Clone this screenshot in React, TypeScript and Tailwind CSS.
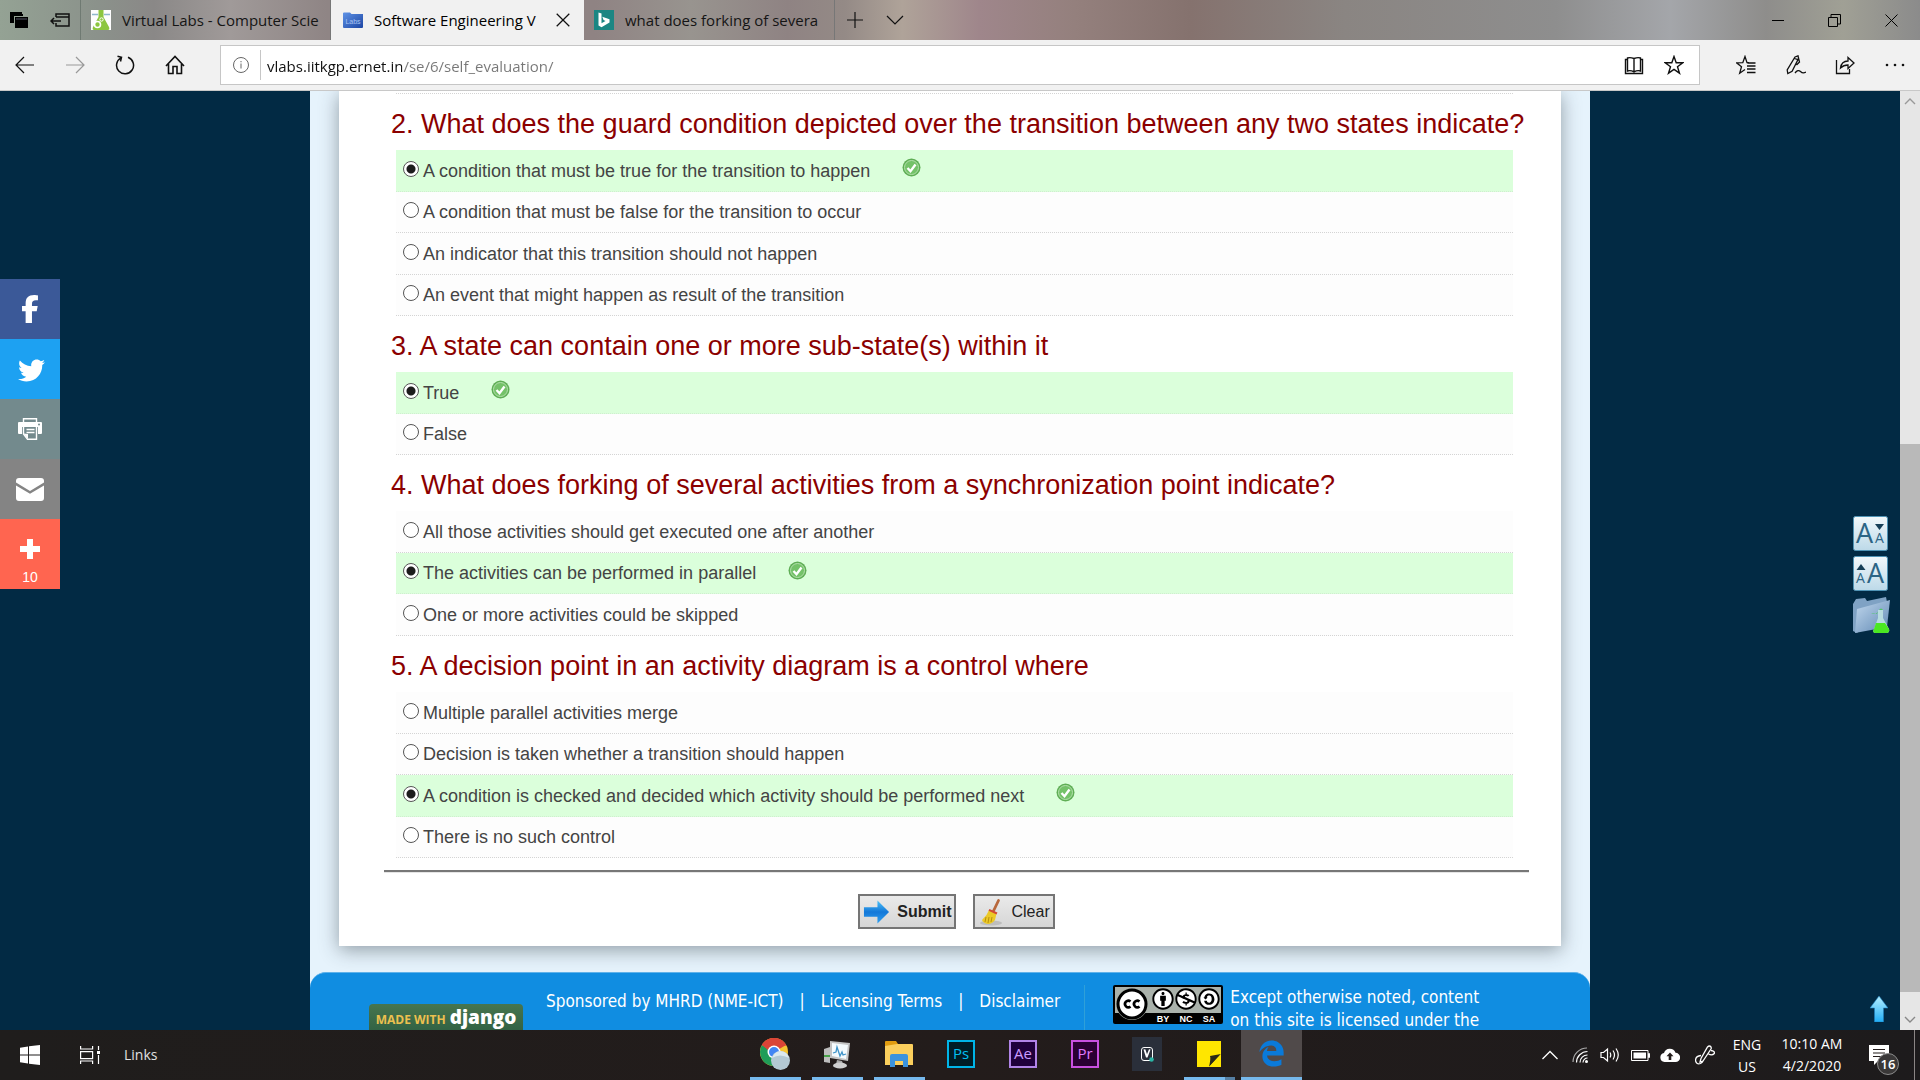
import React from "react";
import {
  FaFacebookF,
  FaTwitter,
  FaEdgeLegacy,
  FaCreativeCommonsBy,
  FaCreativeCommonsNc,
  FaCreativeCommonsSa,
} from "react-icons/fa6";

type Question = { title: string; options: string[]; answer: number };

const questions: Question[] = [
  {
    title: "2. What does the guard condition depicted over the transition between any two states indicate?",
    options: [
      "A condition that must be true for the transition to happen",
      "A condition that must be false for the transition to occur",
      "An indicator that this transition should not happen",
      "An event that might happen as result of the transition",
    ],
    answer: 0,
  },
  {
    title: "3. A state can contain one or more sub-state(s) within it",
    options: ["True", "False"],
    answer: 0,
  },
  {
    title: "4. What does forking of several activities from a synchronization point indicate?",
    options: [
      "All those activities should get executed one after another",
      "The activities can be performed in parallel",
      "One or more activities could be skipped",
    ],
    answer: 1,
  },
  {
    title: "5. A decision point in an activity diagram is a control where",
    options: [
      "Multiple parallel activities merge",
      "Decision is taken whether a transition should happen",
      "A condition is checked and decided which activity should be performed next",
      "There is no such control",
    ],
    answer: 2,
  },
];

/* ---------- browser chrome ---------- */

function FlaskFavicon() {
  return (
    <svg width="20" height="20" viewBox="0 0 20 20" aria-hidden="true">
      <rect width="20" height="20" fill="#fdfdfd" />
      <path d="M1 4.500h6M13 4.500h6" stroke="#8fb8cc" strokeWidth="1.400" />
      <path d="M7.500 0h5v7l5.500 10q1 3-1 3H3q-2 0-1-3l5.500-10z" fill="#8cc63f" />
      <circle cx="6.500" cy="14.500" r="3" fill="none" stroke="#fff" strokeWidth="1.600" />
      <circle cx="10.500" cy="9.500" r="1.700" fill="none" stroke="#fff" strokeWidth="1" />
    </svg>
  );
}

function FolderFavicon() {
  return (
    <svg width="20" height="20" viewBox="0 0 20 20" aria-hidden="true">
      <defs>
        <linearGradient id="fold" x1="0" y1="0" x2="1" y2="1">
          <stop offset="0" stopColor="#5f93e6" />
          <stop offset="1" stopColor="#1c46a4" />
        </linearGradient>
      </defs>
      <path d="M0 3.500q0-1 1-1h6l1.500 1.500H20v13q0 1-1 1H1q-1 0-1-1z" fill="url(#fold)" />
      <text x="10" y="14" textAnchor="middle" fontSize="7" fill="#a9c4f2" fontFamily="Liberation Sans, sans-serif">
        Labs
      </text>
    </svg>
  );
}

function BingFavicon() {
  return (
    <svg width="20" height="20" viewBox="0 0 20 20" aria-hidden="true">
      <rect width="20" height="20" fill="#1b8683" />
      <path d="M4.500 2.500l3 1.100v9.600l4-2.300-2-1-1.200-3.100 7.200 2.500v3.300l-8 4.700-3-1.700z" fill="#fff" />
    </svg>
  );
}

function Stroke({ children, size = 20, color = "#111", width = 1.2 }: { children: React.ReactNode; size?: number; color?: string; width?: number }) {
  return (
    <svg width={size} height={size} viewBox="0 0 20 20" fill="none" stroke={color} strokeWidth={width} aria-hidden="true">
      {children}
    </svg>
  );
}

function TabBar() {
  return (
    <header className="flex h-10 shrink-0 items-stretch bg-[linear-gradient(90deg,#94a294_0%,#8b928b_5%,#8a8887_8%,#a09a99_12%,#8f8585_17%,#8f8383_31%,#98948f_36%,#8f8383_41%,#948a86_44%,#afa399_47%,#9f868b_51%,#94807d_56%,#85726e_62%,#8a8582_70%,#8e8e8e_81%,#a4a6aa_87%,#8e8d8b_92%,#a0a095_96%,#8b8b8b_100%)]">
      <div className="flex w-[81px] items-center border-r border-[#6f7a72] text-black">
        <button aria-label="Tabs you've set aside" className="ml-2.5">
          <svg width="20" height="20" viewBox="0 0 20 20" aria-hidden="true">
            <path d="M0 2h12v2h1v2H4v7H0z" fill="#000" />
            <path d="M5 7h13v11H5z" fill="#000" />
            <path d="M6 9h11" stroke="#556" strokeWidth="1" />
          </svg>
        </button>
        <button aria-label="Set these tabs aside" className="ml-5">
          <Stroke>
            <path d="M6 7V4h13v12H6v-3M6 7h13M1 11h10M4 8l-3 3 3 3" strokeWidth="1.500" />
          </Stroke>
        </button>
      </div>
      <button className="flex w-[250px] items-center gap-[11px] border-r border-[#777] pl-2.5 text-[15px] text-[#151515]">
        <FlaskFavicon />
        <span className="text-left whitespace-nowrap">Virtual Labs - Computer Scie</span>
      </button>
      <div className="flex w-[253px] items-center bg-[#f1f1f1] pl-3 text-[15px] text-black">
        <FolderFavicon />
        <span className="ml-[11px] grow whitespace-nowrap">Software Engineering V</span>
        <button aria-label="Close tab" className="mr-3">
          <Stroke size={18}>
            <path d="M3 3l14 14M17 3L3 17" strokeWidth="1.400" />
          </Stroke>
        </button>
      </div>
      <button className="flex w-[251px] items-center gap-[11px] border-r border-[#777] pl-2.5 text-[15px] text-[#151515]">
        <BingFavicon />
        <span className="text-left whitespace-nowrap">what does forking of severa</span>
      </button>
      <button aria-label="New tab" className="flex w-10 items-center justify-center">
        <Stroke>
          <path d="M2 10h16M10 2v16" />
        </Stroke>
      </button>
      <button aria-label="Show tab previews" className="flex w-10 items-center justify-center">
        <Stroke>
          <path d="M2 6l8 8 8-8" />
        </Stroke>
      </button>
      <div className="ml-auto flex">
        <button aria-label="Minimize" className="flex w-[57px] items-center justify-center">
          <span className="h-px w-3 bg-black" />
        </button>
        <button aria-label="Restore" className="flex w-[57px] items-center justify-center">
          <svg width="13" height="13" viewBox="0 0 13 13" fill="none" stroke="#000" aria-hidden="true">
            <path d="M.5 3.500h9v9h-9zM3 3V.5h9.500V10H10" />
          </svg>
        </button>
        <button aria-label="Close" className="flex w-[57px] items-center justify-center">
          <svg width="13" height="13" viewBox="0 0 13 13" fill="none" stroke="#000" aria-hidden="true">
            <path d="M.5.5l12 12M12.500.5l-12 12" />
          </svg>
        </button>
      </div>
    </header>
  );
}

function Toolbar() {
  return (
    <nav className="flex h-[51px] shrink-0 items-center border-b border-[#c8c8c8] bg-[#f1f1f1]">
      <button aria-label="Back" className="flex w-[49px] justify-center">
        <Stroke>
          <path d="M1 10h18M9 2l-8 8 8 8" />
        </Stroke>
      </button>
      <button aria-label="Forward" className="flex w-[51px] justify-center">
        <Stroke color="#999">
          <path d="M1 10h18M11 2l8 8-8 8" />
        </Stroke>
      </button>
      <button aria-label="Refresh" className="flex w-[50px] justify-center">
        <svg width="20" height="20" viewBox="0 0 20 20" fill="none" stroke="#111" strokeWidth="1.500" aria-hidden="true">
          <path d="M13 2.300A8.500 8.500 0 1 1 6 2.800M2.500 1.300l4 1-1 4.200" />
        </svg>
      </button>
      <button aria-label="Home" className="flex w-[50px] justify-center">
        <Stroke>
          <path d="M1 11l9-9.500 9 9.500M3.500 9v9.500h4.500v-7h4v7h4.500V9" strokeWidth="1.600" />
        </Stroke>
      </button>
      <div className="ml-5 flex h-10 grow items-center border border-[#c6c6c6] bg-white">
        <button aria-label="Site information" className="flex w-[39px] items-center justify-center">
          <svg width="16" height="16" viewBox="0 0 16 16" fill="none" stroke="#666" aria-hidden="true">
            <circle cx="8" cy="8" r="7.500" />
            <path d="M8 6.500v5M8 4v1.300" />
          </svg>
        </button>
        <span className="h-[30px] w-px bg-[#c6c6c6]" />
        <input
          aria-label="Address"
          defaultValue="vlabs.iitkgp.ernet.in/se/6/self_evaluation/"
          className="ml-1.5 min-w-0 grow bg-[linear-gradient(90deg,#111_135px,#777_135px)] bg-clip-text pt-0.5 text-[15px] text-transparent outline-none"
        />
        <button aria-label="Reading view" className="flex w-[41px] justify-center">
          <Stroke>
            <path d="M10 3.500v14M10 3.500Q6 2 3.500 3v13q3-1 6.500.8M10 3.500q4-1.500 6.500-.5v13q-3-1-6.500.8M3.500 4.500h-2v14h17v-14h-2" strokeWidth="1.400" />
          </Stroke>
        </button>
        <button aria-label="Add to favorites" className="mr-[5px] flex w-10 justify-center">
          <Stroke>
            <path d="M10 1.500l2.200 6.200 6.600.1-5.300 4 2 6.400L10 14.400l-5.500 3.800 2-6.400-5.300-4 6.600-.1z" strokeWidth="1.400" />
          </Stroke>
        </button>
      </div>
      <div className="flex pl-5">
        <button aria-label="Favorites hub" className="flex w-[51px] justify-center">
          <Stroke>
            <path d="M13 7.700l-2-.1L9 1.500 6.800 7.600l-6.300.2 5 4-1.800 6.400L9 14.500M11 11h8.500M11 14h8.500M11 17.500h8.500M11.500 8h8" strokeWidth="1.300" />
          </Stroke>
        </button>
        <button aria-label="Add notes" className="flex w-[49px] justify-center">
          <Stroke>
            <path d="M9 2l3-1.200.6 2.500-6.500 13-4.300 2.200-.6-3.500L9 2zM8.500 3.500l3.500 1.200M12.500 3l1 4-3 3M9 18q3-4 5.500-1.500T20 17" strokeWidth="1.300" />
          </Stroke>
        </button>
        <button aria-label="Share" className="flex w-[49px] justify-center">
          <Stroke>
            <path d="M1.500 5v13.500h13V14M5.500 13q1-7 7.500-7V2.500L19 8l-6 5.500V10q-4.500 0-7.500 3z" strokeWidth="1.300" />
          </Stroke>
        </button>
        <button aria-label="Settings and more" className="flex w-[51px] justify-center">
          <svg width="20" height="20" viewBox="0 0 20 20" fill="#111" aria-hidden="true">
            <circle cx="2" cy="10" r="1.300" />
            <circle cx="10" cy="10" r="1.300" />
            <circle cx="18" cy="10" r="1.300" />
          </svg>
        </button>
      </div>
    </nav>
  );
}

/* ---------- page content ---------- */

function CorrectBadge() {
  return (
    <svg width="19" height="19" viewBox="0 0 19 19" role="img" aria-label="Correct">
      <circle cx="9.500" cy="9.500" r="9" fill="#5fae55" />
      <circle cx="9.500" cy="9.500" r="7" fill="#74c269" stroke="#b4e0ad" strokeWidth="1" />
      <path d="M5.500 10l3 3.200 5-6.700" fill="none" stroke="#fff" strokeWidth="2.400" />
    </svg>
  );
}

function QuestionBlock({ question, number }: { question: Question; number: number }) {
  return (
    <fieldset className="min-w-0">
      <legend className="flex h-14 w-full items-center pt-1 text-[27px] leading-8 whitespace-nowrap text-[#8b0000]">
        {question.title}
      </legend>
      <ul className="ml-[5px]">
        {question.options.map((option, i) => {
          const chosen = i === question.answer;
          return (
            <li
              key={option}
              className={
                chosen
                  ? "flex h-[41px] items-center border-b border-dotted border-[#cfeecf] bg-[#dbffdb] odd:h-[42px]"
                  : "flex h-[41px] items-center border-b border-dotted border-[#d4d4d4] bg-[#fdfdfd] odd:h-[42px]"
              }
            >
              <label className="flex items-center gap-1 pl-[7px] text-[18px] leading-6 text-[#444]">
                <input
                  type="radio"
                  name={`question-${number}`}
                  defaultChecked={chosen}
                  className="mb-1 size-4 appearance-none rounded-full border border-[#555] bg-white checked:bg-[radial-gradient(circle,#1c1c1c_4px,#fff_5px)]"
                />
                <span>{option}</span>
              </label>
              {chosen && (
                <span className="mb-1.5 ml-8">
                  <CorrectBadge />
                </span>
              )}
            </li>
          );
        })}
      </ul>
    </fieldset>
  );
}

function ArrowIcon() {
  return (
    <svg width="27" height="26" viewBox="0 0 28 26" aria-hidden="true">
      <defs>
        <linearGradient id="arrow" x1="0" y1="0" x2="0" y2="1">
          <stop offset="0" stopColor="#4cc3fa" />
          <stop offset=".5" stopColor="#1478d8" />
          <stop offset="1" stopColor="#2fa0f2" />
        </linearGradient>
      </defs>
      <path d="M1 8h14V1l12 12-12 12v-7H1z" fill="url(#arrow)" />
    </svg>
  );
}

function BroomIcon() {
  return (
    <svg width="26" height="28" viewBox="0 0 26 28" aria-hidden="true">
      <ellipse cx="13" cy="25" rx="11" ry="2.500" fill="#bdbdbd" />
      <path d="M20.500 2.500L15 14" stroke="#b8683c" strokeWidth="2.800" strokeLinecap="round" />
      <path d="M11 12l7.500 3.500-1.500 6.500q-3 4-7 4-5-1-6-4l4.500-5z" fill="#ecc927" />
      <path d="M8 19l-1 5M11 19l-1 6M14 19l-1 5" stroke="#b8900e" strokeWidth="1" />
      <path d="M11 11.800l8 3.700" stroke="#d24a35" strokeWidth="2" />
    </svg>
  );
}

function CreativeCommonsBadge() {
  return (
    <svg width="110" height="39" viewBox="0 0 110 39" role="img" aria-label="Creative Commons BY NC SA">
      <rect width="110" height="39" rx="2" fill="#000" />
      <rect x="2" y="2" width="106" height="26" fill="#aab2ab" />
      <circle cx="19" cy="19" r="16" fill="#aab2ab" />
      <circle cx="19" cy="19" r="14" fill="#fff" stroke="#000" strokeWidth="3" />
      <path d="M17.500 16.500a3.300 3.300 0 1 0 0 5M26.500 16.500a3.300 3.300 0 1 0 0 5" fill="none" stroke="#000" strokeWidth="2.600" />
      <circle cx="50" cy="14" r="10" fill="#fff" />
      <circle cx="73" cy="14" r="10" fill="#fff" />
      <circle cx="96" cy="14" r="10" fill="#fff" />
      <g className="text-black">
        <FaCreativeCommonsBy x={39} y={3} size={22} />
        <FaCreativeCommonsNc x={62} y={3} size={22} />
        <FaCreativeCommonsSa x={85} y={3} size={22} />
      </g>
      <g fill="#fff" fontFamily="Liberation Sans, sans-serif" fontSize="9" fontWeight="700" textAnchor="middle">
        <text x="50" y="36.500">BY</text>
        <text x="73" y="36.500">NC</text>
        <text x="96" y="36.500">SA</text>
      </g>
    </svg>
  );
}

function SiteFooter() {
  return (
    <footer className="mt-[26px] flex grow items-start rounded-t-2xl border-t border-[#5fb2ea] bg-[#108de1] pl-[59px] font-['DejaVu_Sans_Condensed','DejaVu_Sans',sans-serif] text-[17px] leading-[23px] text-white">
      <a
        href="#django"
        className="mt-[31px] flex h-[30px] w-[154px] shrink-0 items-center justify-center gap-1 rounded-t-sm bg-linear-to-b from-[#47754e] to-[#2f6043] font-['Open_Sans',sans-serif] whitespace-nowrap"
      >
        <span className="text-[12px] font-bold text-[#ecc04f]">MADE WITH</span>
        <span className="pb-1 text-[19px] font-extrabold">django</span>
      </a>
      <nav className="mt-[17px] ml-[23px] flex gap-4 whitespace-nowrap">
        <a href="#mhrd">Sponsored by MHRD (NME-ICT)</a>
        <span>|</span>
        <a href="#terms">Licensing Terms</a>
        <span>|</span>
        <a href="#disclaimer">Disclaimer</a>
      </nav>
      <div className="mt-3 ml-6 flex gap-[7px] border-l border-[#2fa0d8] pl-7 whitespace-nowrap">
        <CreativeCommonsBadge />
        <p className="pt-px">
          Except otherwise noted, content
          <br />
          on this site is licensed under the
        </p>
      </div>
    </footer>
  );
}

function ShareBar() {
  return (
    <aside className="absolute top-[188px] left-0 flex w-[60px] flex-col text-white">
      <a href="#facebook" aria-label="Facebook" className="flex h-[60px] items-center justify-center bg-[#3b5998]">
        <FaFacebookF size={28} />
      </a>
      <a href="#twitter" aria-label="Twitter" className="flex h-[60px] items-center justify-center bg-[#1da1f2] pt-0.5 pl-0.5">
        <FaTwitter size={27} />
      </a>
      <a href="#print" aria-label="Print" className="flex h-[60px] items-center justify-center bg-[#738a8d]">
        <svg width="24" height="22" viewBox="0 0 24 22" fill="none" aria-hidden="true">
          <path d="M5.500 4V.7h13V4" stroke="#fff" strokeWidth="1.400" />
          <path d="M1 4h22q1 0 1 1v10q0 1-1 1h-3V9H4v7H1q-1 0-1-1V5q0-1 1-1z" fill="#fff" />
          <path d="M5.500 9v7l4 5.300h9V9M8.500 11.500h8M8.500 14.500h8" stroke="#fff" strokeWidth="1.400" />
          <path d="M5.500 15.500l4.500.5v5z" fill="#fff" />
          <circle cx="21" cy="6.500" r="1" fill="#738a8d" />
        </svg>
      </a>
      <a href="#mail" aria-label="Email" className="flex h-[60px] items-center justify-center bg-[#848484]">
        <svg width="28" height="23" viewBox="0 0 28 23" fill="#fff" aria-hidden="true">
          <path d="M0 3q0-3 3-3h22q3 0 3 3v1.500L14 13 0 4.500z" />
          <path d="M0 7.500l14 8.300 14-8.300V20q0 3-3 3H3q-3 0-3-3z" />
        </svg>
      </a>
      <a href="#more" aria-label="More shares" className="flex h-[70px] flex-col items-center bg-[#ff6550] pt-5 text-sm leading-5">
        <svg width="20" height="20" viewBox="0 0 20 20" fill="#fff" aria-hidden="true">
          <path d="M7 0h6v7h7v6h-7v7H7v-7H0V7h7z" />
        </svg>
        <span className="pt-2">10</span>
      </a>
    </aside>
  );
}

function FontTools() {
  return (
    <aside className="absolute top-[425px] right-3 flex w-[35px] flex-col gap-[5px]">
      <svg width="0" height="0" className="absolute" aria-hidden="true">
        <defs>
          <linearGradient id="tile" x1="0" y1="0" x2="0" y2="1">
            <stop offset="0" stopColor="#f2f8fb" />
            <stop offset="1" stopColor="#bcd9e8" />
          </linearGradient>
          <linearGradient id="folderface" x1="0" y1="0" x2="1" y2="1">
            <stop offset="0" stopColor="#c3d9ee" />
            <stop offset="1" stopColor="#5f88b4" />
          </linearGradient>
        </defs>
      </svg>
      <button aria-label="Decrease text size">
        <svg width="35" height="35" viewBox="0 0 35 35" className="block overflow-visible" aria-hidden="true">
          <rect x=".5" y=".5" width="34" height="34" rx="2" fill="url(#tile)" stroke="#4f93b5" />
          <g fill="#2c6485" fontFamily="Open Sans, sans-serif">
            <text x="3" y="27" fontSize="27">A</text>
            <text x="22" y="27" fontSize="14">A</text>
          </g>
          <path d="M22 8h9l-4.500 6z" fill="#173f57" />
        </svg>
      </button>
      <button aria-label="Increase text size">
        <svg width="35" height="35" viewBox="0 0 35 35" className="block overflow-visible" aria-hidden="true">
          <rect x=".5" y=".5" width="34" height="34" rx="2" fill="url(#tile)" stroke="#4f93b5" />
          <g fill="#2c6485" fontFamily="Open Sans, sans-serif">
            <text x="3" y="27" fontSize="14">A</text>
            <text x="14" y="27" fontSize="27">A</text>
          </g>
          <path d="M3.500 14h9L8 8z" fill="#173f57" />
        </svg>
      </button>
      <a href="#labs" aria-label="Labs folder">
        <svg width="38" height="38" viewBox="0 0 38 38" className="block" aria-hidden="true">
          <path d="M0 8l3-5 9-1 2 3 19-4 1 5L4 37l-4-2z" fill="#7fa2c4" />
          <path d="M4 13L37 4l-3 27L2 37z" fill="url(#folderface)" />
          <path d="M18 17q5 3 8-3 2-3 4 0-5 0-6 4z" fill="#4fc86a" />
          <path d="M25 14h5v8l6 11q1 3-2 4H22q-3-1-1-4l4-11z" fill="#b8dce0" />
          <path d="M23 27h9l4 6q1 3-2 4H22q-3-1-1-4z" fill="#4be822" />
        </svg>
      </a>
    </aside>
  );
}

function WebPage() {
  return (
    <main className="relative flex min-h-0 grow bg-[#022a44] font-['Liberation_Sans',sans-serif]">
      <div className="relative flex min-w-0 grow justify-center overflow-hidden">
        <div className="flex w-full max-w-7xl flex-col bg-[#e6f3fc]">
          <div className="mx-[29px] bg-white pr-8 pb-[17px] pl-[45px] shadow-[0_4px_18px_rgba(40,50,60,0.45)]">
            <form onSubmit={(e) => e.preventDefault()}>
              <div className="pr-4 pl-[7px]">
                <div className="ml-[5px] h-[3px] border-b border-dotted border-[#d4d4d4]" />
                {questions.map((q, i) => (
                  <QuestionBlock key={q.title} question={q} number={i + 2} />
                ))}
              </div>
              <hr className="mt-3 border-t-2 border-b border-t-[#777] border-b-[#e5e5e5]" />
              <div className="mt-[21px] flex justify-center gap-[17px] text-base leading-6 text-[#222]">
                <button
                  type="submit"
                  className="flex h-[35px] items-center gap-[7px] border-2 border-[#757575] bg-linear-to-b from-[#eaeaea] to-[#d6d6d6] px-[3px] font-bold"
                >
                  <ArrowIcon />
                  Submit
                </button>
                <button
                  type="reset"
                  className="flex h-[35px] items-center gap-[7px] border-2 border-[#757575] bg-linear-to-b from-[#eaeaea] to-[#d6d6d6] px-[3px]"
                >
                  <BroomIcon />
                  Clear
                </button>
              </div>
            </form>
          </div>
          <SiteFooter />
        </div>
        <ShareBar />
        <FontTools />
        <a href="#top" aria-label="Back to top" className="absolute right-3 bottom-2">
          <svg width="18" height="26" viewBox="0 0 18 26" className="block" aria-hidden="true">
            <defs>
              <linearGradient id="up" x1="0" y1="0" x2="0" y2="1">
                <stop offset="0" stopColor="#b5efff" />
                <stop offset="1" stopColor="#22aef5" />
              </linearGradient>
            </defs>
            <path d="M9 0l9 12h-4.500v14h-9V12H0z" fill="url(#up)" stroke="#1c7fc0" strokeWidth=".6" />
          </svg>
        </a>
      </div>
      <div className="flex w-5 shrink-0 flex-col items-center bg-[#e6e6e6]">
        <button aria-label="Scroll up" className="flex h-5 items-center">
          <svg width="12" height="8" viewBox="0 0 12 8" fill="none" stroke="#999" strokeWidth="1.400" aria-hidden="true">
            <path d="M1 7l5-5 5 5" />
          </svg>
        </button>
        <div className="flex w-full grow flex-col">
          <div className="basis-[37%]" />
          <div className="basis-[61%] bg-[#b9b9b9]" />
        </div>
        <button aria-label="Scroll down" className="flex h-5 items-center">
          <svg width="12" height="8" viewBox="0 0 12 8" fill="none" stroke="#888" strokeWidth="1.400" aria-hidden="true">
            <path d="M1 1l5 5 5-5" />
          </svg>
        </button>
      </div>
    </main>
  );
}

/* ---------- taskbar ---------- */

function ChromeIcon() {
  return (
    <svg width="32" height="34" viewBox="0 0 32 34" aria-hidden="true">
      <circle cx="15" cy="15" r="14" fill="#f6c433" />
      <path d="M15 15L2.900 8A14 14 0 0 1 27.100 8z" fill="#db4437" />
      <path d="M15 15L2.900 8A14 14 0 0 0 14 29l5-8z" fill="#1f9d58" />
      <path d="M15 8.500h12.500A14 14 0 0 0 2.900 8l6 5z" fill="#db4437" />
      <circle cx="15" cy="15" r="6.500" fill="#fff" />
      <circle cx="15" cy="15" r="5" fill="#4285f4" />
      <circle cx="21.500" cy="23.500" r="9.500" fill="#b4c9d4" />
      <path d="M13 21q8-5 17 0-2-7-9-7-6 1-8 7z" fill="#dbe8ee" />
    </svg>
  );
}

function MonitorIcon() {
  return (
    <svg width="28" height="30" viewBox="0 0 28 30" aria-hidden="true">
      <path d="M1 10l6-2v16l-6-1z" fill="#bdbdbd" />
      <path d="M1 17h6" stroke="#49a24a" strokeWidth="2" />
      <path d="M7 2l20 2-2 18-18-3z" fill="#c4c4c4" />
      <path d="M9 4l16 2-2 14-14-3z" fill="#f4fafd" />
      <path d="M10 14l3-1 1-5 3 9 2-4 1 3 3-1" fill="none" stroke="#3f93c8" strokeWidth="1.300" />
      <path d="M14 21l5 1 1 3h-7z" fill="#aaa" />
      <ellipse cx="17" cy="26.500" rx="7" ry="3" fill="#d0d0d0" />
    </svg>
  );
}

function ExplorerIcon() {
  return (
    <svg width="28" height="26" viewBox="0 0 28 26" aria-hidden="true">
      <path d="M0 1q0-1 1-1h10l2 3v5H0z" fill="#e29d10" />
      <path d="M0 5l12-2h15q1 0 1 1v20H0z" fill="#fbcf5d" />
      <path d="M5 26V15q0-2 2-2h14q2 0 2 2v11h-5v-6h-8v6z" fill="#3c93dd" />
    </svg>
  );
}

function StickyIcon() {
  return (
    <svg width="24" height="26" viewBox="0 0 24 26" aria-hidden="true">
      <path d="M0 0h24v26H0z" fill="#ffe600" />
      <path d="M12 26q2-9 1-11l11-2z" fill="#2a2a18" />
      <path d="M24 13v13H12z" fill="#ffe600" />
    </svg>
  );
}

function MusicIcon() {
  return (
    <svg width="30" height="34" viewBox="0 0 30 34" aria-hidden="true">
      <rect width="30" height="34" fill="#2a2f3a" />
      <rect x="9.500" y="10.500" width="11" height="13" rx="2.500" fill="none" stroke="#fff" />
      <path d="M11.500 12.500l2.500 8h1.500l3-8-1.500-.2-2 5-1.700-5z" fill="#fff" />
      <circle cx="19.500" cy="22.500" r="2.300" fill="#2bb5a5" />
    </svg>
  );
}

function TaskButton({ label, open = false, children }: { label: string; open?: boolean; children: React.ReactNode }) {
  return (
    <button aria-label={label} className="flex w-[62px] flex-col items-center">
      <span className="flex h-[47px] items-center">{children}</span>
      {open && <span className="h-[3px] w-[51px] bg-[#76b9ed]" />}
    </button>
  );
}

function Taskbar() {
  return (
    <footer className="flex h-[50px] shrink-0 items-stretch bg-linear-to-r from-[#1f1d1c] via-[#231c1b] to-[#1d1b1c] text-sm text-white">
      <div className="flex w-[744px] items-center">
        <button aria-label="Start" className="ml-5">
          <svg width="20" height="20" viewBox="0 0 20 20" fill="#fff" aria-hidden="true">
            <path d="M0 2.700L8 1.500v8H0zM9 1.300L20 0v9.500H9zM0 10.500h8v8l-8-1.200zM9 10.500h11V20L9 18.700z" />
          </svg>
        </button>
        <button aria-label="Task view" className="ml-10">
          <svg width="20" height="20" viewBox="0 0 20 20" fill="none" stroke="#fff" strokeWidth="1.200" aria-hidden="true">
            <path d="M.6 1v3h12V1M.6 6.600h12v7H.6zM.6 19v-3h12v3M18.500 1v4M18.500 10v9" />
            <path d="M17 6h3v3h-3z" fill="#fff" stroke="none" />
          </svg>
        </button>
        <span className="ml-6 text-[#e0e0e0]">Links</span>
      </div>
      <TaskButton label="Chrome" open>
        <ChromeIcon />
      </TaskButton>
      <TaskButton label="Resource monitor" open>
        <MonitorIcon />
      </TaskButton>
      <TaskButton label="File Explorer" open>
        <ExplorerIcon />
      </TaskButton>
      <TaskButton label="Photoshop">
        <span className="flex h-7 w-7 items-center justify-center border-2 border-[#00b5e8] bg-[#001d26] text-[15px] font-medium text-[#00c0f3]">Ps</span>
      </TaskButton>
      <TaskButton label="After Effects">
        <span className="flex h-7 w-7 items-center justify-center border-2 border-[#b184e8] bg-[#1f003c] text-[15px] font-medium text-[#cb9cff]">Ae</span>
      </TaskButton>
      <TaskButton label="Premiere Pro">
        <span className="flex h-7 w-7 items-center justify-center border-2 border-[#c850e0] bg-[#2a0033] text-[15px] font-medium text-[#e07aff]">Pr</span>
      </TaskButton>
      <TaskButton label="Music">
        <MusicIcon />
      </TaskButton>
      <button aria-label="Sticky Notes" className="flex w-[62px] flex-col">
        <span className="flex h-[47px] items-center self-center">
          <StickyIcon />
        </span>
        <span className="ml-1.5 h-[3px] w-[51px] border-r-10 border-[#557fa3] bg-[#76b9ed]" />
      </button>
      <button aria-label="Edge" className="ml-px flex w-[61px] flex-col items-center bg-[#504a4a]">
        <span className="flex h-[47px] items-center text-[#0a7ad9]">
          <FaEdgeLegacy size={27} />
        </span>
        <span className="h-[3px] w-full bg-[#76b9ed]" />
      </button>
      <div className="ml-auto flex items-center">
        <button aria-label="Show hidden icons" className="flex w-[30px] justify-center">
          <svg width="16" height="10" viewBox="0 0 16 10" fill="none" stroke="#fff" strokeWidth="1.300" aria-hidden="true">
            <path d="M.5 9L8 1.500 15.500 9" />
          </svg>
        </button>
        <button aria-label="Wi-Fi" className="flex w-[30px] justify-center">
          <svg width="16" height="16" viewBox="0 0 16 16" fill="none" stroke="#fff" strokeWidth="1.200" aria-hidden="true">
            <path d="M1 15A14 14 0 0 1 15 1" stroke="#aaa" />
            <path d="M4.500 15.500A11 11 0 0 1 15.500 4.500M8 15.500A7.500 7.500 0 0 1 15.500 8M11 15.500a4.500 4.500 0 0 1 4.500-4.500" />
            <circle cx="14.500" cy="14.500" r="1.500" fill="#fff" stroke="none" />
          </svg>
        </button>
        <button aria-label="Volume" className="flex w-[30px] justify-center">
          <svg width="20" height="16" viewBox="0 0 20 16" fill="none" stroke="#fff" strokeWidth="1.200" aria-hidden="true">
            <path d="M1 5.500h2.500L7.500 2v12l-4-3.500H1zM10 5.500q1.500 2.500 0 5M13 3.500q3 4.500 0 9M16 1.500q4.500 6.500 0 13" />
          </svg>
        </button>
        <button aria-label="Battery" className="flex w-[30px] justify-center">
          <svg width="19" height="11" viewBox="0 0 19 11" aria-hidden="true">
            <path d="M.5.500h16.500v10H.5zM17.500 3.500h1v4h-1z" fill="none" stroke="#fff" />
            <path d="M2.500 2.500H15v6H2.500z" fill="#fff" />
          </svg>
        </button>
        <button aria-label="Cloud upload" className="flex w-[30px] justify-center">
          <svg width="20" height="14" viewBox="0 0 20 14" aria-hidden="true">
            <path d="M4.500 14a4.500 4.500 0 0 1-.5-8.900A6 6 0 0 1 15.500 4.800 4.600 4.600 0 0 1 15.500 14z" fill="#fff" />
            <path d="M10 4.500l3.500 3.800h-2.200V12H8.700V8.300H6.500z" fill="#231c1b" />
          </svg>
        </button>
        <button aria-label="Windows Ink" className="flex w-10 justify-center">
          <svg width="20" height="20" viewBox="0 0 20 20" fill="none" stroke="#fff" strokeWidth="1.300" aria-hidden="true">
            <path d="M8 16l-3 1 1-3.500L12.500 2q2-2 3.500 0 .5 1 0 2L8 16zM6 10.500Q.5 11 .5 15.500 1.500 20 5.500 18.500q2-1 2.500-2.500M13.500 9Q17 11 19.300 8.500 20 6 16 5.500" />
          </svg>
        </button>
        <button className="w-11 pt-0.5 text-center leading-[22px]">
          ENG
          <br />
          US
        </button>
        <button className="w-[86px] text-center leading-[22px]">
          10:10 AM
          <br />
          4/2/2020
        </button>
        <button aria-label="16 notifications" className="relative flex w-[59px] pl-3.5">
          <svg width="20" height="20" viewBox="0 0 20 20" aria-hidden="true">
            <path d="M0 0h20v16H9l-4 4v-4H0z" fill="#fff" />
            <path d="M4 4.500h12M4 8h12M4 11.500h8" stroke="#231c1b" strokeWidth="1.200" />
          </svg>
          <span className="absolute top-2 left-[22px] flex size-[22px] items-center justify-center rounded-full border border-[#8b8b8b] bg-[#3a3838] text-[13px] font-semibold">
            16
          </span>
        </button>
        <span className="mr-[5px] h-[50px] w-px bg-[#8b8685]" />
      </div>
    </footer>
  );
}

export default function App() {
  return (
    <div className="flex h-screen flex-col overflow-hidden font-['Open_Sans','Noto_Sans',sans-serif]">
      <TabBar />
      <Toolbar />
      <WebPage />
      <Taskbar />
    </div>
  );
}
